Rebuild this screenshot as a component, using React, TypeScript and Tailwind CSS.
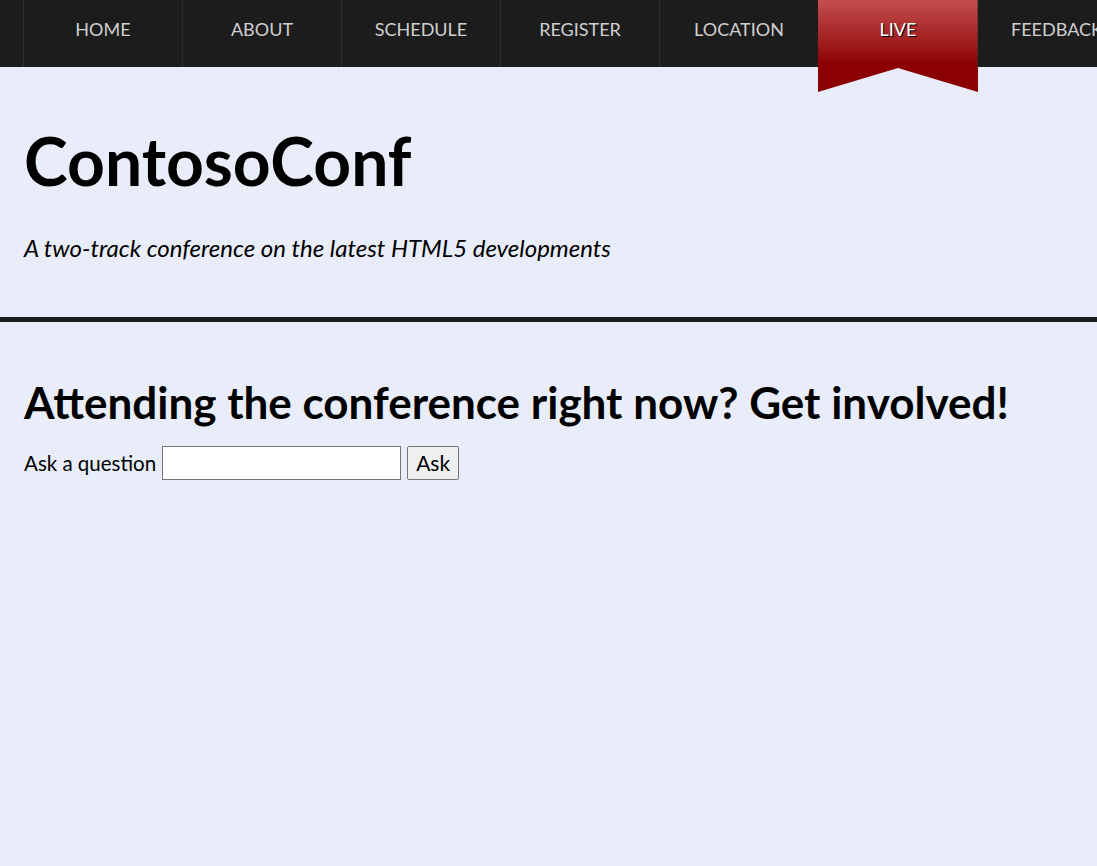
import React from "react";

const navItems = ["Home", "About", "Schedule", "Register", "Location", "Live", "Feedback"];

const NavItem = ({ label }: { label: string }) => {
  const live = label === "Live";
  return (
    <li className="relative h-[67px] w-[159px] shrink-0 border-l border-dotted border-[#3a3a3a]">
      {live && (
        <div className="absolute -left-px top-0 h-[92px] w-[160px] bg-[linear-gradient(to_bottom,#c44f4f_0px,#8b0000_66px,#8b0000_92px)] [clip-path:polygon(0_0,100%_0,100%_100%,50%_74%,0_100%)]" />
      )}
      <a
        href="#"
        className={
          live
            ? "relative flex h-full items-center justify-center pb-[8px] text-[18px] uppercase text-white [text-shadow:1px_1px_0_#000]"
            : "relative flex h-full items-center justify-center pb-[8px] text-[18px] uppercase text-[#cfcfcf]"
        }
      >
        {label}
      </a>
    </li>
  );
};

export default function App() {
  return (
    <div className="min-h-screen w-full overflow-hidden bg-[#e9edf9] font-['Lato','Liberation_Sans',sans-serif] text-black">
      <nav className="h-[67px] bg-[#1c1c1c]">
        <ul className="flex pl-[23px]">
          {navItems.map((item) => (
            <NavItem key={item} label={item} />
          ))}
        </ul>
      </nav>

      <header className="px-6 pb-[57px]">
        <h1 className="mt-[61px] text-[66px] font-bold leading-none">ContosoConf</h1>
        <p className="mt-[42px] text-[24px] italic leading-none">
          A two-track conference on the latest HTML5 developments
        </p>
      </header>

      <div className="h-[5px] bg-[#1c1c1c]" />

      <section className="px-6">
        <h2 className="mt-[58px] text-[44px] font-bold leading-none">
          Attending the conference right now? Get involved!
        </h2>
        <form className="mt-[22px] flex items-center gap-[6px] text-[20.5px]" onSubmit={(e) => e.preventDefault()}>
          <label htmlFor="question">Ask a question</label>
          <input
            id="question"
            type="text"
            className="h-[34px] w-[239px] border border-[#767676] bg-white px-1"
          />
          <button
            type="submit"
            className="h-[34px] w-[52px] rounded-[2px] border border-[#767676] bg-[#efefef] text-[21px]"
          >
            Ask
          </button>
        </form>
      </section>
    </div>
  );
}
